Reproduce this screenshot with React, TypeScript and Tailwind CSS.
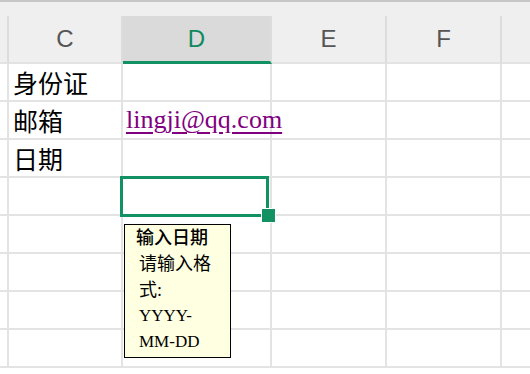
import React from "react";

const cols = ["w-[9px]", "w-[114px]", "w-[149px]", "w-[115px]", "w-[115px]", "flex-1"];
const headers = ["", "C", "D", "E", "F", ""];

function Row({ idx }: { idx: number }) {
  const cjk = { fontFamily: '"Noto Sans CJK SC", sans-serif' };
  const cText: Record<number, string> = { 0: "身份证", 1: "邮箱", 2: "日期" };
  return (
    <div className="flex h-[38px] shrink-0 border-b-2 border-[#e3e3e3]">
      {cols.map((w, c) => (
        <div
          key={c}
          className={`${w} ${c < 5 ? "border-r-2 border-[#e3e3e3]" : ""} relative h-full shrink-0 flex items-center`}
        >
          {c === 1 && cText[idx] && (
            <span className="pl-[4px] text-[25px] leading-none text-black" style={cjk}>
              {cText[idx]}
            </span>
          )}
          {c === 2 && idx === 1 && (
            <span
              className="pl-[3px] text-[26px] leading-none text-[#800080] underline decoration-[2px] underline-offset-[4px]"
              style={{ fontFamily: '"Liberation Serif", serif' }}
            >
              lingji@qq.com
            </span>
          )}
          {c === 2 && idx === 3 && (
            <>
              <div className="absolute left-[-3px] top-[-2px] right-[1px] bottom-[-3px] border-[3px] border-[#129163] z-10" />
              <div className="absolute right-[-5px] bottom-[-8px] w-[13px] h-[13px] bg-[#129163] ring-1 ring-white z-20" />
              <div
                className="absolute left-[1px] top-[46px] w-[107px] h-[134px] border border-black bg-[#ffffe1] z-30 text-black text-[17px] leading-[26px]"
                style={{ fontFamily: '"Liberation Serif", "Noto Sans CJK SC", serif' }}
              >
                <div className="pl-[11px] text-[18px] font-medium">输入日期</div>
                <div className="pl-[14px] text-[18px]">请输入格</div>
                <div className="pl-[14px] text-[18px]">式:</div>
                <div className="pl-[14px]">YYYY-</div>
                <div className="pl-[14px]">MM-DD</div>
              </div>
            </>
          )}
        </div>
      ))}
    </div>
  );
}

export default function App() {
  return (
    <div className="w-[530px] h-[374px] overflow-hidden bg-white flex flex-col">
      <div className="h-[16px] shrink-0 bg-[#efefef] border-t-2 border-[#c6c6c6]" />
      <div className="flex h-[48px] shrink-0 bg-[#efefef]">
        {cols.map((w, c) => (
          <div
            key={c}
            className={`${w} ${c < 5 ? "border-r-2 border-[#dcdcdc]" : ""} ${
              c === 2 ? "bg-[#dadada] border-b-[3px] border-b-[#129163]" : "border-b-2 border-b-[#e3e3e3]"
            } h-full shrink-0 flex items-center justify-center`}
          >
            <span
              className={`text-[24px] leading-none ${c === 2 ? "text-[#10895d]" : "text-[#555555]"}`}
              style={{ fontFamily: '"Liberation Sans", Arial, sans-serif' }}
            >
              {headers[c]}
            </span>
          </div>
        ))}
      </div>
      {Array.from({ length: 8 }).map((_, i) => (
        <Row key={i} idx={i} />
      ))}
    </div>
  );
}
